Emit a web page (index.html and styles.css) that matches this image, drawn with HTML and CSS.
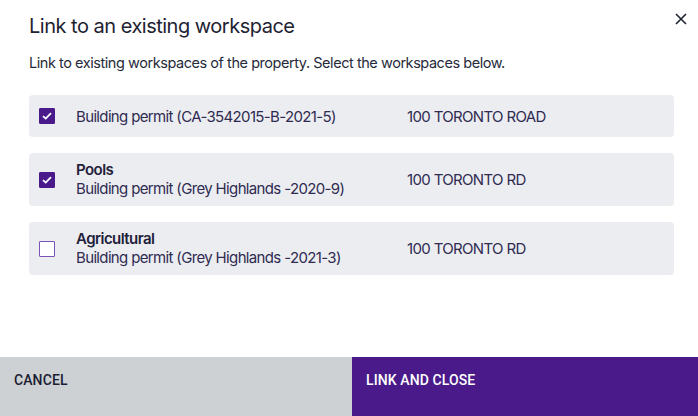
FILE: index.html
```html
<!DOCTYPE html>
<html>
<head>
<meta charset="utf-8">
<link rel="stylesheet" href="styles.css">
</head>
<body>
<div class="dialog">
  <div class="content">
    <div class="header">
      <h1 class="title">Link to an existing workspace</h1>
      <button class="close" aria-label="Close">
        <svg width="12" height="12" viewBox="0 0 12 12"><path d="M1 1L11 11M11 1L1 11" stroke="#1f2433" stroke-width="1.6" fill="none"/></svg>
      </button>
    </div>
    <p class="intro">Link to existing workspaces of the property. Select the workspaces below.</p>
    <div class="list">
      <div class="row">
        <span class="check on"><svg width="10" height="8" viewBox="0 0 10 8"><path d="M1 4.2L3.7 6.6L9 1.2" stroke="#fff" stroke-width="1.8" fill="none"/></svg></span>
        <div class="name"><div class="sub">Building permit (CA-3542015-B-2021-5)</div></div>
        <div class="addr">100 TORONTO ROAD</div>
      </div>
      <div class="row tall">
        <span class="check on"><svg width="10" height="8" viewBox="0 0 10 8"><path d="M1 4.2L3.7 6.6L9 1.2" stroke="#fff" stroke-width="1.8" fill="none"/></svg></span>
        <div class="name"><div class="label">Pools</div><div class="sub">Building permit (Grey Highlands -2020-9)</div></div>
        <div class="addr">100 TORONTO RD</div>
      </div>
      <div class="row tall">
        <span class="check"></span>
        <div class="name"><div class="label">Agricultural</div><div class="sub">Building permit (Grey Highlands -2021-3)</div></div>
        <div class="addr">100 TORONTO RD</div>
      </div>
    </div>
  </div>
  <div class="footer">
    <button class="btn cancel">CANCEL</button>
    <button class="btn primary">LINK AND CLOSE</button>
  </div>
</div>
</body>
</html>
```
FILE: styles.css
```css
* { box-sizing: border-box; }
html, body { margin: 0; padding: 0; background: #fff; }
body { font-family: Inter, "Noto Sans", sans-serif; color: #262a3b; letter-spacing: -0.45px; }
.dialog { width: 698px; height: 416px; display: flex; flex-direction: column; }
.content { flex: 1; padding: 0 24px 0 29px; }
.header { display: flex; justify-content: space-between; align-items: flex-start; height: 50px; }
.title { margin: 14px 0 0; font-size: 20px; font-weight: 400; color: #1e2231; letter-spacing: -0.5px; }
.close { border: 0; background: none; padding: 0; margin: 13px -13px 0 0; width: 12px; height: 12px; cursor: pointer; display: flex; }
.intro { margin: 4px 0 0; font-size: 14.5px; color: #262a3b; line-height: 18px; }
.list { margin-top: 23px; display: flex; flex-direction: column; gap: 16px; width: 645px; }
.row { background: #ecedf0; border-radius: 4px; height: 42px; display: flex; align-items: center; padding-left: 10px; }
.row.tall { height: 53px; }
.check { width: 16px; height: 16px; border: 1.5px solid #7a52b8; border-radius: 1px; display: flex; align-items: center; justify-content: center; background: #fff; flex: none; }
.check.on { background: #4a1a8a; border-color: #4a1a8a; }
.name { margin-left: 21px; width: 331px; flex: none; }
.label { font-weight: 600; font-size: 15px; color: #22203a; line-height: 18px; letter-spacing: -0.55px; }
.sub { font-size: 15px; color: #2f2b52; line-height: 19px; letter-spacing: -0.65px; }
.addr { font-size: 15px; color: #2f2b52; letter-spacing: -0.65px; }
.footer { display: flex; height: 59px; }
.btn { flex: none; border: 0; height: 59px; display: flex; align-items: flex-start; padding: 15px 14px 0; font-family: Roboto, sans-serif; font-weight: 500; font-size: 14px; letter-spacing: 0.1px; cursor: pointer; }
.cancel { width: 352px; background: #cdd1d4; color: #1c1d33; }
.primary { width: 346px; background: #4a1a8a; color: #fff; }
```
